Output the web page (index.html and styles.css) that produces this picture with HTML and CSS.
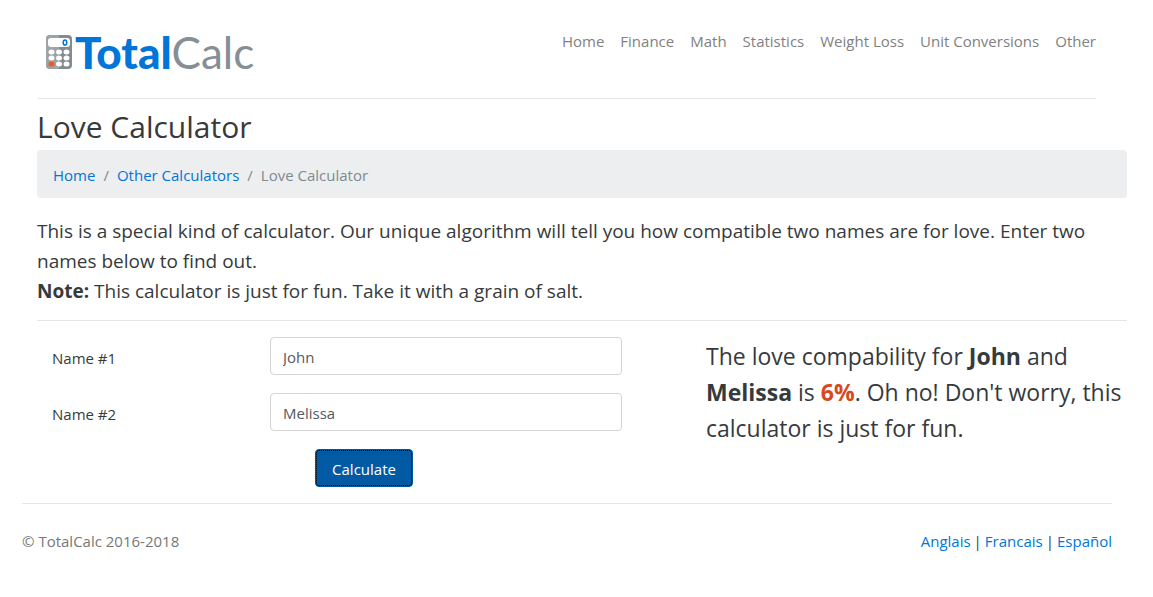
FILE: index.html
```html
<!DOCTYPE html>
<html lang="en">
<head>
  <meta charset="UTF-8">
  <meta name="viewport" content="width=device-width, initial-scale=1.0">
  <title>Love Calculator - TotalCalc</title>
  <link rel="stylesheet" href="styles.css">
</head>
<body>

<div class="container">

  <header class="header">
    <a class="logo" href="#">
      <svg class="logo-icon" width="26" height="36" viewBox="0 0 26 36" aria-hidden="true">
        <rect x="0" y="1" width="26" height="34" rx="4" fill="#858c91"/>
        <path d="M4 1h9v34H4a4 4 0 0 1-4-4V5a4 4 0 0 1 4-4z" fill="#9da3a7"/>
        <rect x="2" y="4" width="22" height="9" rx="3" fill="#fff"/>
        <ellipse cx="19" cy="8.500" rx="1.800" ry="2.600" fill="none" stroke="#0275d8" stroke-width="1.500"/>
        <g fill="#fff">
          <ellipse cx="5.500" cy="18" rx="3" ry="2.500"/>
          <ellipse cx="13" cy="18" rx="3" ry="2.500"/>
          <ellipse cx="20.500" cy="18" rx="3" ry="2.500"/>
          <ellipse cx="5.500" cy="24" rx="3" ry="2.500"/>
          <ellipse cx="13" cy="24" rx="3" ry="2.500"/>
          <ellipse cx="20.500" cy="24" rx="3" ry="2.500"/>
          <ellipse cx="13" cy="30" rx="3" ry="2.500"/>
          <ellipse cx="20.500" cy="30" rx="3" ry="2.500"/>
        </g>
        <ellipse cx="5.500" cy="30" rx="3" ry="2.500" fill="#f15a24"/>
      </svg>
      <span class="logo-text"><b>Total</b>Calc</span>
    </a>
    <nav class="nav">
      <a href="#">Home</a>
      <a href="#">Finance</a>
      <a href="#">Math</a>
      <a href="#">Statistics</a>
      <a href="#">Weight Loss</a>
      <a href="#">Unit Conversions</a>
      <a href="#">Other</a>
    </nav>
  </header>

  <main class="main">
    <h1>Love Calculator</h1>
    <ol class="breadcrumb">
      <li><a href="#">Home</a></li>
      <li><a href="#">Other Calculators</a></li>
      <li class="active">Love Calculator</li>
    </ol>

    <p class="lead">This is a special kind of calculator. Our unique algorithm will tell you how compatible two names are for love. Enter two names below to find out.<br>
    <strong>Note:</strong> This calculator is just for fun. Take it with a grain of salt.</p>

    <div class="calculator">
      <form class="form">
        <div class="form-row">
          <label for="name1">Name #1</label>
          <input type="text" id="name1" value="John">
        </div>
        <div class="form-row">
          <label for="name2">Name #2</label>
          <input type="text" id="name2" value="Melissa">
        </div>
        <button class="btn" type="button">Calculate</button>
      </form>
      <p class="result">The love compability for <strong>John</strong> and <strong>Melissa</strong> is <strong class="percent">6%</strong>. Oh no! Don't worry, this calculator is just for fun.</p>
    </div>
  </main>

  <footer class="footer">
    <span class="copyright">© TotalCalc 2016-2018</span>
    <div class="languages">
      <a href="#">Anglais</a>
      <span>|</span>
      <a href="#">Francais</a>
      <span>|</span>
      <a href="#">Español</a>
    </div>
  </footer>

</div>

</body>
</html>
```
FILE: styles.css
```css
* {
  box-sizing: border-box;
}
body {
  margin: 0;
  font-family: "Segoe UI", "Open Sans", "Noto Sans", sans-serif;
  font-size: 15px;
  line-height: 24px;
  color: #373a3c;
  background: #fff;
}
a {
  color: #0275d8;
  text-decoration: none;
}
a:hover {
  text-decoration: underline;
}
.container {
  padding: 0 26px 0 22px;
}

/* Header */
.header {
  display: flex;
  justify-content: space-between;
  align-items: flex-start;
  margin: 0 31px 0 16px;
  padding: 29px 0 23px 8px;
  border-bottom: 1px solid #e5e5e5;
}
.logo {
  display: flex;
  align-items: center;
  gap: 3px;
  height: 46px;
}
.logo:hover {
  text-decoration: none;
}
.logo-text {
  font-family: Lato, sans-serif;
  font-size: 44px;
  line-height: 46px;
  color: #868e96;
}
.logo-text b {
  font-weight: 900;
  color: #0275d8;
}
.nav {
  display: flex;
  gap: 16px;
}
.nav a {
  color: #818181;
}

/* Content */
.main {
  margin-left: 15px;
}
h1 {
  margin: 0;
  padding: 10px 0 6px;
  font-size: 30px;
  font-weight: 400;
  line-height: 35px;
}
.breadcrumb {
  display: flex;
  margin: 0 0 18px;
  padding: 13px 16px 11px;
  list-style: none;
  background: #eceeef;
  border-radius: 4px;
}
.breadcrumb li + li::before {
  content: "/";
  padding: 0 8px;
  color: #818a91;
}
.breadcrumb .active {
  color: #818a91;
}
.lead {
  margin: 0;
  padding-bottom: 14px;
  font-size: 19px;
  line-height: 30px;
  border-bottom: 1px solid #e5e5e5;
}
.calculator {
  display: grid;
  grid-template-columns: 3fr 2fr;
  padding: 16px 0;
}
.form {
  display: flex;
  flex-direction: column;
  align-items: center;
  gap: 18px;
}
.form-row {
  display: grid;
  grid-template-columns: 4fr 7fr 1fr;
  align-items: center;
  width: 100%;
}
.form-row label {
  padding: 4px 15px 0;
}
.form-row input {
  min-width: 0;
  height: 38px;
  margin: 0 15px;
  padding: 7px 12px 5px;
  font: inherit;
  color: #55595c;
  background: #fff;
  border: 1px solid #d4d4d5;
  border-radius: 4px;
}
.btn {
  height: 38px;
  padding: 2px 16px 0;
  font: inherit;
  color: #fff;
  background: #025aa5;
  border: 1px solid #01549b;
  border-radius: 4px;
  outline: 1px dotted #000;
  outline-offset: -2px;
  cursor: pointer;
}
.result {
  margin: 0;
  padding: 1px 0 0 15px;
  font-size: 23px;
  line-height: 36px;
}
.percent {
  color: #d9481c;
}

/* Footer */
.footer {
  display: flex;
  justify-content: space-between;
  margin-right: 15px;
  padding: 25px 0;
  border-top: 1px solid #e5e5e5;
}
.copyright {
  color: #777;
}
.languages {
  display: flex;
  gap: 3px;
}
```
